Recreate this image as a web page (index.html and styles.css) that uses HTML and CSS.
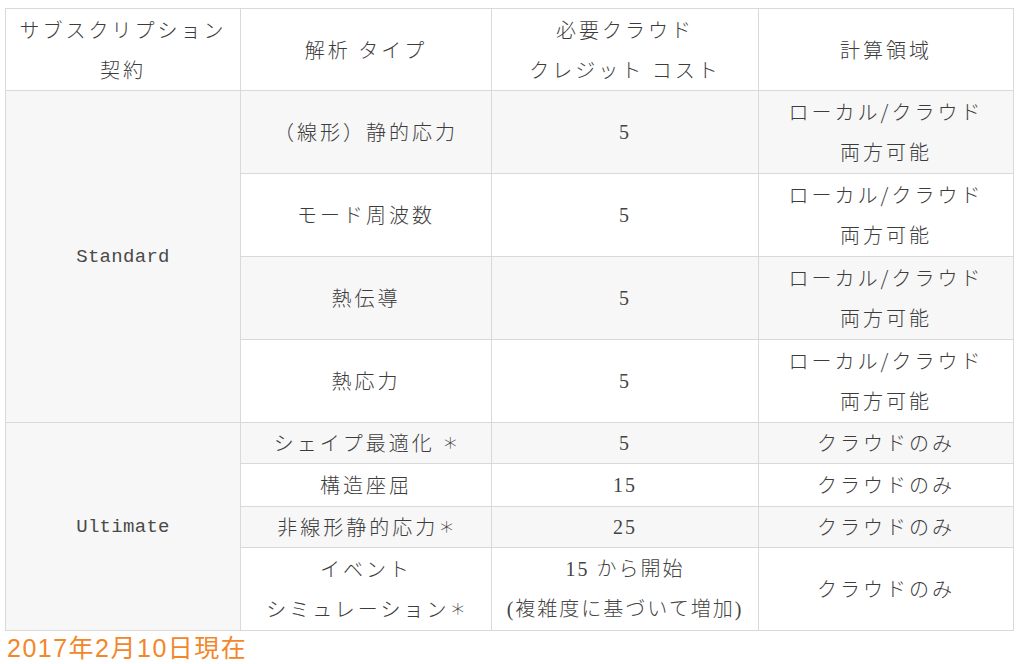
FILE: index.html
```html
<!DOCTYPE html>
<html lang="ja">
<head>
<meta charset="utf-8">
<title>サブスクリプション契約</title>
<link rel="stylesheet" href="styles.css">
</head>
<body>
<table class="plans">
  <colgroup>
    <col class="c1"><col class="c2"><col class="c3"><col class="c4">
  </colgroup>
  <tr class="head">
    <th>サブスクリプション<br>契約</th>
    <th>解析 タイプ</th>
    <th>必要クラウド<br>クレジット コスト</th>
    <th>計算領域</th>
  </tr>
  <tr class="tall alt">
    <td rowspan="4" class="plan">Standard</td>
    <td>（線形）静的応力</td>
    <td class="num">5</td>
    <td>ローカル/クラウド<br>両方可能</td>
  </tr>
  <tr class="tall">
    <td>モード周波数</td>
    <td class="num">5</td>
    <td>ローカル/クラウド<br>両方可能</td>
  </tr>
  <tr class="tall alt">
    <td>熱伝導</td>
    <td class="num">5</td>
    <td>ローカル/クラウド<br>両方可能</td>
  </tr>
  <tr class="tall">
    <td>熱応力</td>
    <td class="num">5</td>
    <td>ローカル/クラウド<br>両方可能</td>
  </tr>
  <tr class="short alt">
    <td rowspan="4" class="plan">Ultimate</td>
    <td>シェイプ最適化 <span class="ast">∗</span></td>
    <td class="num">5</td>
    <td>クラウドのみ</td>
  </tr>
  <tr class="short mid">
    <td>構造座屈</td>
    <td class="num">15</td>
    <td>クラウドのみ</td>
  </tr>
  <tr class="short alt">
    <td>非線形静的応力<span class="ast">∗</span></td>
    <td class="num">25</td>
    <td>クラウドのみ</td>
  </tr>
  <tr class="tall">
    <td>イベント<br>シミュレーション<span class="ast">∗</span></td>
    <td class="num">15 から開始<br>(複雑度に基づいて増加)</td>
    <td>クラウドのみ</td>
  </tr>
</table>
<p class="note">2017年2月10日現在</p>
</body>
</html>
```

FILE: styles.css
```css
html, body {
  margin: 0;
  padding: 0;
  background: #ffffff;
}

body {
  padding: 8px 0 0 5px;
  font-family: "Noto Sans CJK JP", "Liberation Sans", sans-serif;
}

.plans {
  border-collapse: collapse;
  table-layout: fixed;
  width: 1008px;
  color: #3c3c3c;
  font-size: 20px;
  font-weight: 300;
  line-height: 40px;
  letter-spacing: 3px;
}

.c1 { width: 235px; }
.c2 { width: 251px; }
.c3 { width: 267px; }
.c4 { width: 255px; }

.plans th,
.plans td {
  border: 1px solid #d9d9d9;
  text-align: center;
  vertical-align: middle;
  padding: 0 4px;
  font-weight: 300;
  white-space: nowrap;
}

.head { height: 82px; }
.tall { height: 83px; }
.short { height: 41px; }
.short.mid { height: 43px; }

.alt td { background: #f7f7f7; }

.plans td.plan {
  background: #f7f7f7;
  font-family: "Liberation Mono", monospace;
  font-size: 19px;
  letter-spacing: 0.3px;
  font-weight: normal;
  color: #4a4a4a;
}

.num {
  font-family: "Liberation Serif", "Noto Sans CJK JP", serif;
  letter-spacing: 2px;
  color: #444444;
}

.ast {
  font-family: "DejaVu Sans", sans-serif;
  font-size: 26px;
  line-height: 0;
  letter-spacing: 0;
}

.note {
  margin: 0;
  padding: 2px 0 0 2px;
  color: #f2872a;
  font-family: "Liberation Sans", "Noto Sans CJK JP", sans-serif;
  font-size: 25px;
  line-height: 30px;
  letter-spacing: 1.5px;
}
```
